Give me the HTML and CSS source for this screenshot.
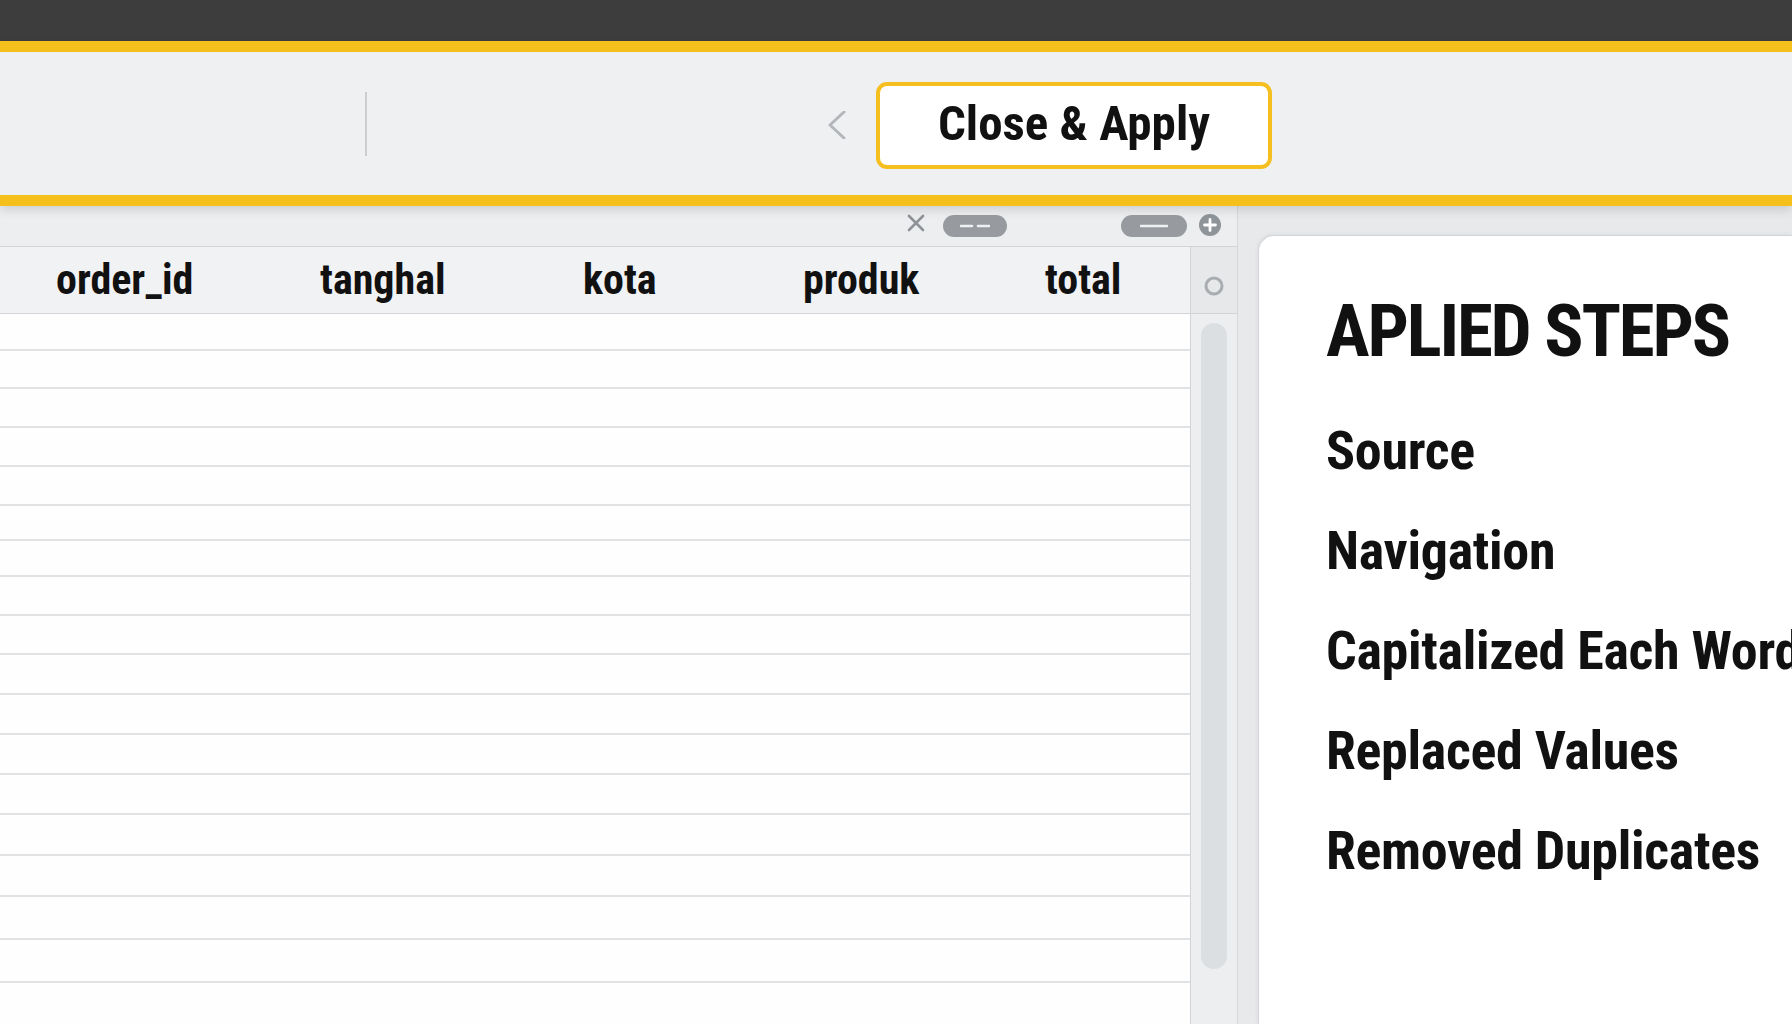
FILE: index.html
```html
<!DOCTYPE html>
<html lang="id">
<head>
    <meta charset="UTF-8">
    <meta name="viewport" content="width=device-width, initial-scale=1.0">
    <title>Power Query Editor</title>
    <link rel="stylesheet" href="styles.css">
</head>
<body>
    <div class="titlebar"></div>

    <div class="ribbon">
        <span class="ribbon-sep"></span>
        <button class="nav-back" aria-label="Back">
            <svg width="18" height="28" viewBox="0 0 18 28"><polyline points="16,1 2,14 16,27" fill="none" stroke="#b3b7bb" stroke-width="3" stroke-linecap="round" stroke-linejoin="round"/></svg>
        </button>
        <button class="apply-btn">Close &amp; Apply</button>
    </div>

    <div class="workspace">
        <section class="grid-pane">
            <div class="grid-tools">
                <svg class="tool-close" width="18" height="18" viewBox="0 0 18 18"><path d="M2 2 L16 16 M16 2 L2 16" stroke="#8f9398" stroke-width="2.6" stroke-linecap="round"/></svg>
                <span class="pill pill-split">
                    <svg width="30" height="4" viewBox="0 0 30 4"><path d="M1 2 H12 M18 2 H29" stroke="#eef0f2" stroke-width="2.6" stroke-linecap="round"/></svg>
                </span>
                <span class="pill pill-single">
                    <svg width="28" height="4" viewBox="0 0 28 4"><path d="M1 2 H27" stroke="#eef0f2" stroke-width="2.6" stroke-linecap="round"/></svg>
                </span>
                <svg class="tool-add" width="22" height="22" viewBox="0 0 22 22"><circle cx="11" cy="11" r="11" fill="#8f9499"/><path d="M11 5.5 V16.5 M5.5 11 H16.5" stroke="#fff" stroke-width="2.8" stroke-linecap="round"/></svg>
            </div>

            <div class="grid-body">
                <div class="grid-main">
                    <div class="grid-head">
                        <div>order_id</div>
                        <div>tanghal</div>
                        <div>kota</div>
                        <div>produk</div>
                        <div>total</div>
                    </div>
                    <div class="grid-rows">
                        <div class="row"></div>
                        <div class="row"></div>
                        <div class="row"></div>
                        <div class="row"></div>
                        <div class="row"></div>
                        <div class="row"></div>
                        <div class="row"></div>
                        <div class="row"></div>
                        <div class="row"></div>
                        <div class="row"></div>
                        <div class="row"></div>
                        <div class="row"></div>
                        <div class="row"></div>
                        <div class="row"></div>
                        <div class="row"></div>
                        <div class="row"></div>
                        <div class="row"></div>
                        <div class="row"></div>
                    </div>
                </div>
                <div class="grid-side">
                    <div class="side-head">
                        <svg width="22" height="22" viewBox="0 0 22 22"><circle cx="11" cy="11" r="8" fill="none" stroke="#a9adb1" stroke-width="3"/></svg>
                    </div>
                    <div class="side-track">
                        <div class="thumb"></div>
                    </div>
                </div>
            </div>
        </section>

        <aside class="steps">
            <h2>APLIED STEPS</h2>
            <ul class="step-list">
                <li>Source</li>
                <li>Navigation</li>
                <li>Capitalized Each Word</li>
                <li>Replaced Values</li>
                <li>Removed Duplicates</li>
            </ul>
        </aside>
    </div>
</body>
</html>
```

FILE: styles.css
```css
* {
    box-sizing: border-box;
}
body {
    margin: 0;
    height: 1024px;
    overflow: hidden;
    background-color: #e7e9eb;
    font-family: "Liberation Sans Narrow", "Roboto Condensed", "DejaVu Sans Condensed", "Liberation Sans", sans-serif;
    font-weight: bold;
    color: #111;
}

/* top chrome */
.titlebar {
    height: 41px;
    background-color: #3d3d3d;
}
.ribbon {
    position: relative;
    z-index: 1;
    height: 165px;
    display: flex;
    align-items: center;
    padding-left: 365px;
    background-color: #eff0f1;
    border-top: 11px solid #f5c01c;
    border-bottom: 11px solid #f5c01c;
    box-shadow: 0 4px 10px rgba(0, 0, 0, 0.13);
}
.ribbon-sep {
    width: 2px;
    height: 64px;
    background-color: #cbced1;
}
.nav-back {
    margin-left: 461px;
    margin-top: 3px;
    padding: 0;
    border: none;
    background: none;
    display: flex;
}
.apply-btn {
    margin-left: 30px;
    margin-top: 4px;
    width: 396px;
    height: 87px;
    border: 4px solid #f5bf1f;
    border-radius: 11px;
    background-color: #fff;
    font-family: inherit;
    font-weight: bold;
    font-size: 49px;
    color: #111;
    padding: 0 0 4px;
}

/* lower area */
.workspace {
    display: flex;
    height: 818px;
}
.grid-pane {
    width: 1238px;
    display: flex;
    flex-direction: column;
    background-color: #eceef0;
    border-right: 1px solid #d6d8db;
}
.grid-tools {
    height: 40px;
    display: flex;
    align-items: center;
    justify-content: flex-end;
    padding-right: 16px;
}
.tool-close {
    margin-right: 18px;
    margin-top: -6px;
}
.pill {
    height: 22px;
    border-radius: 11px;
    background-color: #979ba0;
    display: flex;
    align-items: center;
    justify-content: center;
}
.pill-split {
    width: 64px;
    margin-right: 114px;
}
.pill-single {
    width: 66px;
    margin-right: 12px;
}
.tool-add {
    margin-top: -2px;
}

.grid-body {
    flex: 1;
    display: flex;
    border-top: 1px solid #d2d4d7;
    overflow: hidden;
}
.grid-main {
    width: 1190px;
    background-color: #fefefe;
}
.grid-head {
    display: grid;
    grid-template-columns: 264px 263px 220px 242px 1fr;
    padding-left: 56px;
    height: 67px;
    line-height: 66px;
    font-size: 42px;
    background-color: #f1f2f3;
    border-bottom: 1px solid #d2d4d7;
    white-space: nowrap;
}
.row {
    height: 39px;
    border-bottom: 2px solid #e1e2e3;
}
.row:nth-child(1) { height: 37px; }
.row:nth-child(2) { height: 38px; }
.row:nth-child(6) { height: 35px; }
.row:nth-child(7) { height: 36px; }
.row:nth-child(n+10) { height: 40px; }
.row:nth-child(n+14) { height: 41px; }
.row:nth-child(n+16) { height: 43px; }

.grid-side {
    width: 47px;
    border-left: 1px solid #d2d4d7;
    display: flex;
    flex-direction: column;
}
.side-head {
    height: 67px;
    display: flex;
    justify-content: center;
    padding-top: 28px;
    background-color: #e6e8ea;
    border-bottom: 1px solid #d2d4d7;
}
.side-track {
    flex: 1;
    padding: 9px 0 0 10px;
}
.thumb {
    width: 26px;
    height: 646px;
    border-radius: 13px;
    background-color: #dcdfe2;
}

/* applied steps panel */
.steps {
    flex: 1;
    margin: 29px 0 0 20px;
    padding: 59px 0 0 67px;
    background-color: #fff;
    border-top: 1px solid #d3d5d8;
    border-left: 1px solid #d3d5d8;
    border-top-left-radius: 16px;
    box-shadow: -1px -1px 4px rgba(0, 0, 0, 0.05);
    white-space: nowrap;
    overflow: hidden;
}
.steps h2 {
    margin: 0 0 33px;
    font-size: 73px;
    line-height: 73px;
    letter-spacing: -2.2px;
}
.step-list {
    list-style: none;
    margin: 0;
    padding: 0;
}
.step-list li {
    height: 100px;
    line-height: 100px;
    font-size: 54px;
    letter-spacing: -0.3px;
}
```
